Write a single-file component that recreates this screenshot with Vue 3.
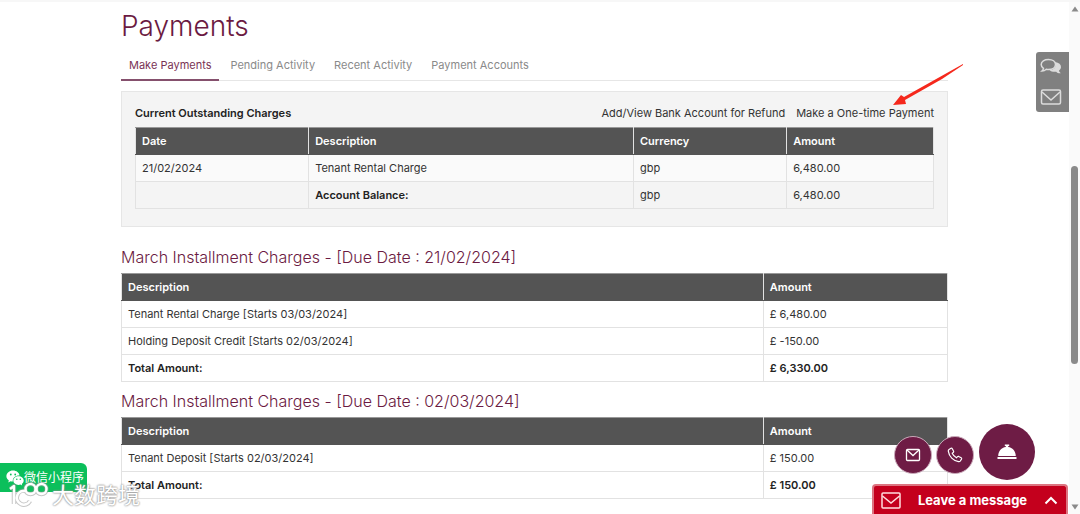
<script setup>
const tabs = ['Make Payments', 'Pending Activity', 'Recent Activity', 'Payment Accounts']
const sections = [
  {
    due: '21/02/2024',
    rows: [
      ['Tenant Rental Charge [Starts 03/03/2024]', '£ 6,480.00'],
      ['Holding Deposit Credit [Starts 02/03/2024]', '£ -150.00'],
    ],
    total: '£ 6,330.00',
  },
  {
    due: '02/03/2024',
    rows: [['Tenant Deposit [Starts 02/03/2024]', '£ 150.00']],
    total: '£ 150.00',
  },
]
</script>

<template>
  <div class="page">
    <main class="content">
      <h1>Payments</h1>
      <nav class="tabs">
        <a v-for="(tab, i) in tabs" :key="tab" href="#" :class="{ active: i === 0 }">{{ tab }}</a>
      </nav>

      <section class="panel">
        <div class="panel-head">
          <h2>Current Outstanding Charges</h2>
          <a href="#">Add/View Bank Account for Refund</a>
          <a href="#" class="pay">
            Make a One-time Payment
            <svg class="arrow" viewBox="0 0 72 44" aria-hidden="true">
              <path d="M71 1 L12 34 L9 32 L1 42 L14 41 L13 37 L50 16 L71 2Z" fill="#f5281c" />
            </svg>
          </a>
        </div>
        <table class="outstanding">
          <colgroup><col class="c-date" /><col class="c-desc" /><col class="c-cur" /><col /></colgroup>
          <thead>
            <tr><th>Date</th><th>Description</th><th>Currency</th><th>Amount</th></tr>
          </thead>
          <tbody>
            <tr><td>21/02/2024</td><td>Tenant Rental Charge</td><td>gbp</td><td>6,480.00</td></tr>
            <tr class="balance"><td></td><td><strong>Account Balance:</strong></td><td>gbp</td><td>6,480.00</td></tr>
          </tbody>
        </table>
      </section>

      <section v-for="s in sections" :key="s.due" class="installment">
        <h3>March Installment Charges - [Due Date : {{ s.due }}]</h3>
        <table>
          <colgroup><col class="c-item" /><col /></colgroup>
          <thead>
            <tr><th>Description</th><th>Amount</th></tr>
          </thead>
          <tbody>
            <tr v-for="r in s.rows" :key="r[0]"><td>{{ r[0] }}</td><td>{{ r[1] }}</td></tr>
            <tr><td><strong>Total Amount:</strong></td><td><strong>{{ s.total }}</strong></td></tr>
          </tbody>
        </table>
      </section>
    </main>

    <aside class="side">
      <button aria-label="Chat">
        <svg width="22" height="18" viewBox="0 0 22 18">
          <path d="M15 4c4 .5 6 2.500 6 5 0 1.500-.8 2.700-2 3.600.1 1.200.8 2 1.800 2.600-2 .2-3.500-.4-4.600-1.500-2.700.3-5-.1-6.700-1.400 4.500-.3 7.500-3.300 5.500-8.300Z" fill="#dcdcdc" />
          <path d="M8.500 1.500c4 0 7 2 7 5s-3 5-7 5c-.8 0-1.500 0-2.200-.2C5 12.500 3.500 13 2 13c.9-.8 1.400-1.600 1.500-2.700C2 9.400 1.200 8 1.200 6.500c0-3 3.300-5 7.300-5Z" fill="#808080" stroke="#dcdcdc" stroke-width="1.500" />
        </svg>
      </button>
      <button aria-label="Email">
        <svg width="22" height="18" viewBox="0 0 22 18" fill="none" stroke="#dcdcdc" stroke-width="1.500">
          <rect x="1.500" y="2" width="19" height="14" rx="1.500" />
          <path d="M2 4l9 8 9-8" />
        </svg>
      </button>
    </aside>

    <div class="scroll" aria-hidden="true">
      <svg width="8" height="6" viewBox="0 0 8 6"><path d="M4 0.500 L7.500 5.500 H.5Z" fill="#8a8a8a" /></svg>
      <div class="track"><div class="thumb"></div></div>
      <svg width="8" height="6" viewBox="0 0 8 6"><path d="M4 5.500 L7.500 .5 H.5Z" fill="#8a8a8a" /></svg>
    </div>

    <div class="fabs">
      <button aria-label="Email us">
        <svg width="16" height="14" viewBox="0 0 16 14" fill="none" stroke="#fff" stroke-width="1.300">
          <rect x="1.500" y="1.500" width="13" height="11" rx="1" />
          <path d="M2 2l6 5.500L14 2" />
        </svg>
      </button>
      <button aria-label="Call us">
        <svg width="16" height="16" viewBox="0 0 16 16" fill="none" stroke="#fff" stroke-width="1.200" stroke-linejoin="round">
          <path d="M2 2.500 4 1.300c.5-.3 1-.1 1.300.4l1.300 2.500c.2.5.1.900-.3 1.200l-1.100.9c.8 1.900 2.300 3.500 4.300 4.500l1-1.100c.3-.4.800-.5 1.200-.3l2.500 1.400c.5.300.6.800.3 1.300l-1.200 1.900c-.4.600-1 .8-1.700.7C6.300 13.900 2 9.500 1.300 4.200c-.1-.700.1-1.300.7-1.700Z" />
        </svg>
      </button>
      <button class="big" aria-label="Concierge">
        <svg width="20" height="16" viewBox="0 0 20 16" fill="#fff">
          <path d="M7.800.5h4.400v1.600h-1v1C15.500 3.600 18.500 7 18.800 12H1.200C1.500 7 4.500 3.600 8.800 3.100v-1h-1Z" />
          <rect x="0.500" y="13" width="19" height="2" />
        </svg>
      </button>
    </div>

    <button class="message">
      <svg width="20" height="17" viewBox="0 0 20 17" fill="none" stroke="#ffdede" stroke-width="1.500">
        <rect x="1" y="1" width="18" height="15" rx="1" />
        <path d="M1.500 4l8.500 7 8.500-7" />
      </svg>
      <span>Leave a message</span>
      <svg width="14" height="9" viewBox="0 0 14 9" fill="none" stroke="#fff" stroke-width="2"><path d="M1.500 7.500 7 2l5.500 5.500" /></svg>
    </button>

    <div class="wechat">
      <svg width="18" height="16" viewBox="0 0 18 16">
        <path d="M7 .5c3.500 0 6.300 2.200 6.500 5-3.800-.2-7.200 2.300-6.700 6-.8 0-1.500-.1-2.200-.3L2.300 12.400l.5-2.100C1.300 9.300.4 7.900.4 6.200.4 3 3.400.5 7 .5Z" fill="#fff" />
        <path d="M12.500 6.300c2.900 0 5.200 1.900 5.200 4.300 0 1.400-.7 2.500-1.900 3.300l.4 1.600-1.800-.9c-.6.2-1.200.3-1.900.3-2.900 0-5.200-1.900-5.200-4.300s2.300-4.300 5.200-4.300Z" fill="#fff" />
        <g fill="#0bbf5b"><circle cx="4.800" cy="4.500" r=".9" /><circle cx="9.200" cy="4.500" r=".9" /><circle cx="10.800" cy="9.300" r=".8" /><circle cx="14.300" cy="9.300" r=".8" /></g>
      </svg>
      <span>微信小程序</span>
    </div>
    <div class="watermark">
      <svg width="40" height="28" viewBox="0 0 40 28" fill="none" stroke-linejoin="round">
        <g stroke="#999" stroke-width="4.500" opacity=".55">
          <path d="M1 8 5 5v18M17 10a7 7 0 1 0 4 10" />
          <circle cx="21.500" cy="8" r="5" /><circle cx="32.500" cy="8" r="5" />
        </g>
        <g stroke="#fff" stroke-width="2.500">
          <path d="M1 8 5 5v18M17 10a7 7 0 1 0 4 10" />
          <circle cx="21.500" cy="8" r="5" /><circle cx="32.500" cy="8" r="5" />
        </g>
      </svg>
      <span>大数跨境</span>
    </div>
  </div>
</template>

<style>
body {
  margin: 0;
  background: #fff;
}
</style>

<style scoped>
.page {
  position: relative;
  box-sizing: border-box;
  height: 100vh;
  overflow: hidden;
  border-top: 2px solid #f7f7f7;
  font: 11px/16px Inter, "Noto Sans CJK SC", sans-serif;
  color: #333;
}
.content {
  padding: 4px 132px 0 121px;
}
h1, h2, h3 {
  margin: 0;
  font-weight: 400;
}
h1 {
  font-size: 28px;
  line-height: 40px;
  font-weight: 300;
  color: #6b1a42;
}
a {
  color: inherit;
  text-decoration: none;
}
.tabs {
  display: flex;
  margin-top: 4px;
  border-bottom: 1px solid #e6e6e6;
  color: #8a8a8a;
}
.tabs a {
  padding: 7px 0 5px;
  margin-bottom: -1px;
  margin-right: 19px;
}
.tabs a.active {
  padding: 7px 8px 6px;
  margin-right: 11px;
  color: #7a3355;
  border-bottom: 2px solid #85506d;
}
.panel {
  margin-top: 10px;
  padding: 13px 13px 17px;
  background: #f4f4f4;
  border: 1px solid #e6e6e6;
}
.panel-head {
  display: flex;
  align-items: center;
  gap: 11px;
  margin-bottom: 6px;
}
h2 {
  flex: 1;
  font-size: 11px;
  line-height: 16px;
  font-weight: 600;
  color: #222;
}
.pay {
  position: relative;
}
.arrow {
  position: absolute;
  right: -30px;
  bottom: 14px;
  width: 72px;
  height: 44px;
}
table {
  width: 100%;
  table-layout: fixed;
  border-collapse: collapse;
}
.c-date { width: 21.7%; }
.c-desc { width: 40.7%; }
.c-cur { width: 19.2%; }
.c-item { width: 77.7%; }
th, td {
  height: 16px;
  padding: 5px 6px;
  border: 1px solid #e2e2e2;
  text-align: left;
}
th {
  background: #545454;
  color: #fff;
  font-weight: 600;
  border-top-color: #999;
  border-bottom-color: #545454;
}
strong {
  font-weight: 600;
  color: #222;
}
.outstanding tbody tr {
  background: #fafafa;
}
.outstanding tbody .balance {
  background: #f4f4f4;
}
.installment {
  margin-top: 7px;
}
.panel + .installment {
  margin-top: 18px;
}
h3 {
  font-size: 16px;
  line-height: 24px;
  font-weight: 300;
  padding-bottom: 4px;
  color: #6b1a42;
}
button {
  display: flex;
  align-items: center;
  justify-content: center;
  padding: 0;
  border: 0;
  background: none;
  font: inherit;
  color: inherit;
}
.side {
  position: absolute;
  top: 50px;
  right: 11px;
  display: flex;
  flex-direction: column;
  gap: 12px;
  padding: 6px 7px 6px 4px;
  border-radius: 3px 0 0 3px;
  background: #808080;
}
.scroll {
  position: absolute;
  top: 0;
  right: 0;
  bottom: 0;
  display: flex;
  flex-direction: column;
  align-items: center;
  width: 11px;
  box-sizing: border-box;
  padding: 4px 0;
  background: #fafafa;
}
.track {
  flex: 1;
  padding-top: 154px;
}
.thumb {
  width: 7px;
  height: 198px;
  border-radius: 4px;
  background: #8a8a8a;
}
.fabs {
  position: absolute;
  right: 45px;
  bottom: 34px;
  display: flex;
  align-items: center;
  gap: 4px;
}
.fabs button {
  width: 38px;
  height: 38px;
  margin-top: 6px;
  border-radius: 50%;
  border: 1px solid #c9a9b9;
  background: #6e1c45;
}
.fabs .big {
  width: 56px;
  height: 56px;
  margin: 0 0 0 1px;
  border: 0;
}
.message {
  position: absolute;
  right: 12px;
  bottom: 0;
  width: 196px;
  height: 30px;
  padding: 0 8px 0 7px;
  justify-content: space-between;
  border: 2px solid #dc7480;
  border-bottom: 0;
  border-radius: 4px 4px 0 0;
  background: #c4001d;
  color: #fff;
  font-size: 13px;
  font-weight: 700;
}
.wechat {
  position: absolute;
  left: 0;
  bottom: 22px;
  display: flex;
  align-items: center;
  height: 29px;
  padding: 0 3px 0 6px;
  border-radius: 0 6px 0 0;
  background: #0bbf5b;
  color: #fff;
  font-size: 12px;
}
.watermark {
  position: absolute;
  left: 9px;
  bottom: 5px;
  display: flex;
  align-items: center;
  gap: 3px;
  color: #fff;
  font-size: 22px;
  line-height: 26px;
  text-shadow: 0 0 2px #888, 0 0 2px #999;
}
</style>
